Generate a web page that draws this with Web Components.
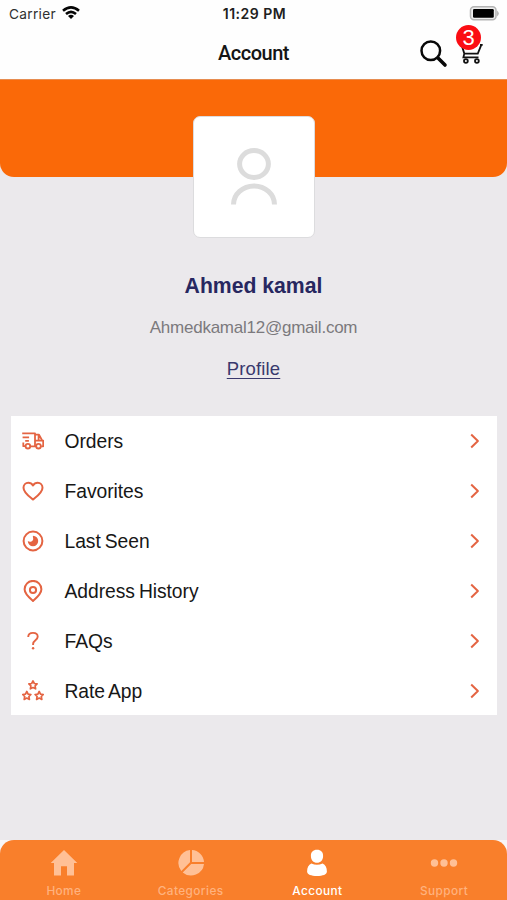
<!DOCTYPE html>
<html lang="en"><head><meta charset="utf-8"><title>Account</title>
<style>html,body{margin:0;height:100%;overflow:hidden}body{font-family:"Liberation Sans",Arial,sans-serif;background:#ebe9ec}</style></head>
<body><account-screen></account-screen>
<script>
const define=(name,html)=>customElements.define(name,class extends HTMLElement{
  constructor(){super();const t=document.createElement('template');
    t.innerHTML=typeof html==='function'?html(this):html;
    this.attachShadow({mode:'open'}).append(t.content.cloneNode(true));}
});
const star=(x,y)=>`<path transform="translate(${x} ${y})" d="M0-4.1 1.3-1.5 4.1-1.1 2.1.9 2.6 3.8 0 2.5-2.6 3.8-2.1.9-4.1-1.1-1.3-1.5Z"/>`;
const icons={
 truck:`<g stroke-width="1.8"><path d="M.2 3.3H13v12.5M.6 7.4h6.5M3.2 10.9h3.7M1.3 12.5v3.7h2M8.3 16.3h5.7M13.2 4.7h3.8l3.3 5.9h.9v5.7h-2M13.2 10.6h7.4M16.6 5.2v5.2"/><circle cx="5.9" cy="16.2" r="2.3"/><circle cx="16.5" cy="16.2" r="2.3"/></g>`,
 heart:`<path d="M11 19.6C7.4 16.5 1.5 12.6 1.5 7.7c0-2.9 2.2-4.9 4.8-4.9 2 0 3.7 1.1 4.7 2.7 1-1.6 2.7-2.7 4.7-2.7 2.6 0 4.8 2 4.8 4.9 0 4.9-5.9 8.8-9.5 11.9Z"/>`,
 seen:`<circle cx="11" cy="11" r="9.4"/><path stroke="none" fill="#e46442" d="M11 5.8A5.2 5.2 0 1 1 5.8 11c.8.7 2 .9 3 .7 1.6-.3 2.5-1.6 2.4-3.2-.1-1-.6-2-.2-2.7Z"/>`,
 pin:`<path d="M11 21c-3.8-3.4-8.4-7-8.4-11.7a8.4 8.4 0 0 1 16.8 0c0 4.7-4.6 8.3-8.4 11.7Z"/><circle cx="11" cy="10" r="3.1"/>`,
 question:`<path stroke-width="1.9" d="M6.2 7C6.3 4.3 8.2 2.9 11 2.9s4.7 1.5 4.7 3.8c0 3.6-4.6 3.5-4.6 7.3v1"/><circle cx="11.1" cy="18.3" r="1.2" fill="#e46442" stroke="none"/>`,
 stars:`<g stroke-width="1.7">${star(11,5)}${star(4.8,15.6)}${star(17.2,15.6)}</g>`};

define('status-bar',`<style>:host{display:grid;grid-template-columns:1fr auto 1fr;align-items:center;height:27px;padding:0 7px 0 9px;box-sizing:border-box;font-family:Inter,sans-serif;font-size:13.7px;color:#303030}
.l{display:flex;align-items:center;gap:6px;letter-spacing:.28px}b{font-weight:600;font-size:14px;letter-spacing:.52px;color:#202020}svg{display:block}.l svg{margin-top:-1px}.b{justify-self:end;margin-top:-1px}</style>
<div class="l"><span>Carrier</span><svg width="18" height="14" viewBox="0 0 18 14" fill="none" stroke="#050505" stroke-width="2.6"><path d="M1 4.8Q9-2 17 4.8M4 8Q9 3.7 14 8"/><path d="M9 13 6 10Q9 7.4 12 10Z" fill="#050505" stroke="none"/></svg></div>
<b>11:29 PM</b><svg class="b" width="31" height="15" viewBox="0 0 31 15"><rect x="1.5" y=".8" width="25.5" height="13" rx="3.5" fill="#eee" stroke="#b4b4b4" stroke-width="1.5"/><rect x="4" y="3" width="20.8" height="8.8" rx="1.2"/><path d="M28.2 4.5v6q3-3 0-6" fill="#aaa"/></svg>`);

define('cart-button',`<style>:host{display:block;position:relative;width:28px;height:40px}svg{display:block}.n{position:absolute;left:0;top:0;width:25px;height:25px;border-radius:50%;background:#fb0d13;color:white;font-size:22px;line-height:26px;text-align:center}</style>
<svg width="28" height="40" viewBox="0 0 28 40" fill="none" stroke="#111" stroke-width="1.8"><path d="M5 18 8.3 28.6H21.8L25.3 19.8M8.3 28.6 7.4 32.4H22.5M26.7 19.8H24"/><circle cx="9.9" cy="36" r="1.9"/><circle cx="20.9" cy="36" r="1.9"/></svg><span class="n">3</span>`);

define('nav-header',`<style>:host{display:grid;grid-template-columns:1fr auto 1fr;align-items:center}h1{margin:0;font:500 20px/24px Roboto,sans-serif;letter-spacing:-.5px;color:#151515}.a{display:flex;justify-content:flex-end;align-items:flex-start;align-self:start;gap:8px;padding:0 23px 0 0}svg{display:block;margin-top:11.5px}cart-button{margin-top:-2px}</style>
<span></span><h1>Account</h1><div class="a"><svg width="29" height="29" viewBox="0 0 29 29" fill="none" stroke="#080808"><circle cx="11.8" cy="11.8" r="9.3" stroke-width="2.5"/><path stroke-width="3.6" stroke-linecap="round" d="m19 19 7 7"/></svg><cart-button></cart-button></div>`);

define('user-avatar',`<style>:host{display:grid;place-items:center;width:122px;height:122px;box-sizing:border-box;background:#fff;border:1px solid #dcdcde;border-radius:7px}svg{display:block}</style><svg width="48" height="60" viewBox="0 0 48 60" fill="none" stroke="#dcdcdc" stroke-width="5"><ellipse cx="24" cy="17" rx="14.4" ry="13.5"/><path d="M3.5 57.5a20.5 18.6 0 0 1 41 0"/></svg>`);

define('profile-hero',`<style>:host{display:flex;flex-direction:column;align-items:center}.o{align-self:stretch;height:98px;background:#fa6908;border-radius:0 0 14px 14px;border-top:1px solid #e78d50;box-sizing:border-box;flex:none}user-avatar{margin-top:-61px;flex:none}
h2{margin:35px 0 0;font-size:21.2px;line-height:26px;color:#272760;font-weight:700}p{margin:18px 0 0;font-size:17px;line-height:22px;letter-spacing:-.24px;color:#7b797d}a{margin-top:17px;font-size:18.5px;line-height:25px;color:#39396e;text-decoration:underline;text-decoration-thickness:1px;text-underline-offset:3px;letter-spacing:.15px}</style>
<div class="o"></div><user-avatar></user-avatar><h2>Ahmed kamal</h2><p>Ahmedkamal12@gmail.com</p><a>Profile</a>`);

define('menu-row',e=>`<style>:host{display:flex;align-items:center;height:50px;padding:0 17px 0 10.5px;font-size:19.3px;letter-spacing:-.06px;word-spacing:-1.2px;color:#171717}.i{flex:none;margin-right:21px}span{flex:1;padding-top:1px}svg{display:block;fill:none;stroke:#e46442;stroke-width:2;stroke-linejoin:round}</style><svg class="i" width="22" height="22" viewBox="0 0 22 22">${icons[e.getAttribute('icon')]}</svg><span><slot></slot></span><svg width="10" height="16" viewBox="0 0 10 16"><path d="m1.2 1.5 6.7 6.5-6.7 6.5"/></svg>`);

define('menu-list',`<style>:host{display:block;background:#fff;height:299px;margin:0 10px 0 11px;overflow:hidden}</style><slot></slot>`);

const tabs={
 home:`<path d="M14 1 27.3 14H24v12.5h-7V17.2h-6v9.3H4V14H.7Z"/>`,
 pie:`<path d="M13 1v12.3L4.3 22A13 13 0 0 1 13 1ZM15 1a13 13 0 0 1 12 12H15ZM27 15A13 13 0 0 1 5.7 23.4L14.2 15Z"/>`,
 user:`<path d="M14 .8c4 0 6.1 2.4 6.1 6.1 0 4-2.5 6.8-6.1 6.8S7.9 10.9 7.9 6.9C7.9 3.2 10 .8 14 .8ZM8.4 14.6Q14 17 19.6 14.6C22.5 16 23.9 18.7 23.9 22.5 23.9 25.5 19.9 27 14 27S4.1 25.5 4.1 22.5C4.1 18.7 5.5 16 8.4 14.6Z"/>`,
 dots:`<circle cx="4.5" cy="14" r="3.7"/><circle cx="14" cy="14" r="3.7"/><circle cx="23.5" cy="14" r="3.7"/>`};
define('tab-item',e=>`<style>:host{flex:1;display:flex;flex-direction:column;align-items:center;gap:7px;padding:9px 0 0 1px;font:500 11.8px/15px Inter,sans-serif;letter-spacing:.42px;color:#ffb27e}:host([active]){color:#fff}svg{display:block;fill:#ffc096}:host([active]) svg{fill:#fff}</style><svg width="28" height="28" viewBox="0 0 28 28">${tabs[e.getAttribute('icon')]}</svg><slot></slot>`);
define('tab-bar',`<style>:host{display:block;background:#f8f6f8}.b{display:flex;height:60px;background:#f97f2b;border-radius:14px 14px 0 0;overflow:hidden}</style><div class="b"><slot></slot></div>`);

define('account-screen',`<style>:host{display:flex;flex-direction:column;height:900px;background:#ebe9ec}.top{background:#fefefe;height:79px;flex:none}nav-header{height:52px}profile-hero{height:337px;flex:none}tab-bar{margin-top:auto}</style>
<div class="top"><status-bar></status-bar><nav-header></nav-header></div>
<profile-hero></profile-hero>
<menu-list><menu-row icon="truck">Orders</menu-row><menu-row icon="heart">Favorites</menu-row><menu-row icon="seen">Last Seen</menu-row><menu-row icon="pin">Address History</menu-row><menu-row icon="question">FAQs</menu-row><menu-row icon="stars">Rate App</menu-row></menu-list>
<tab-bar><tab-item icon="home">Home</tab-item><tab-item icon="pie">Categories</tab-item><tab-item icon="user" active>Account</tab-item><tab-item icon="dots">Support</tab-item></tab-bar>`);
</script></body></html>
